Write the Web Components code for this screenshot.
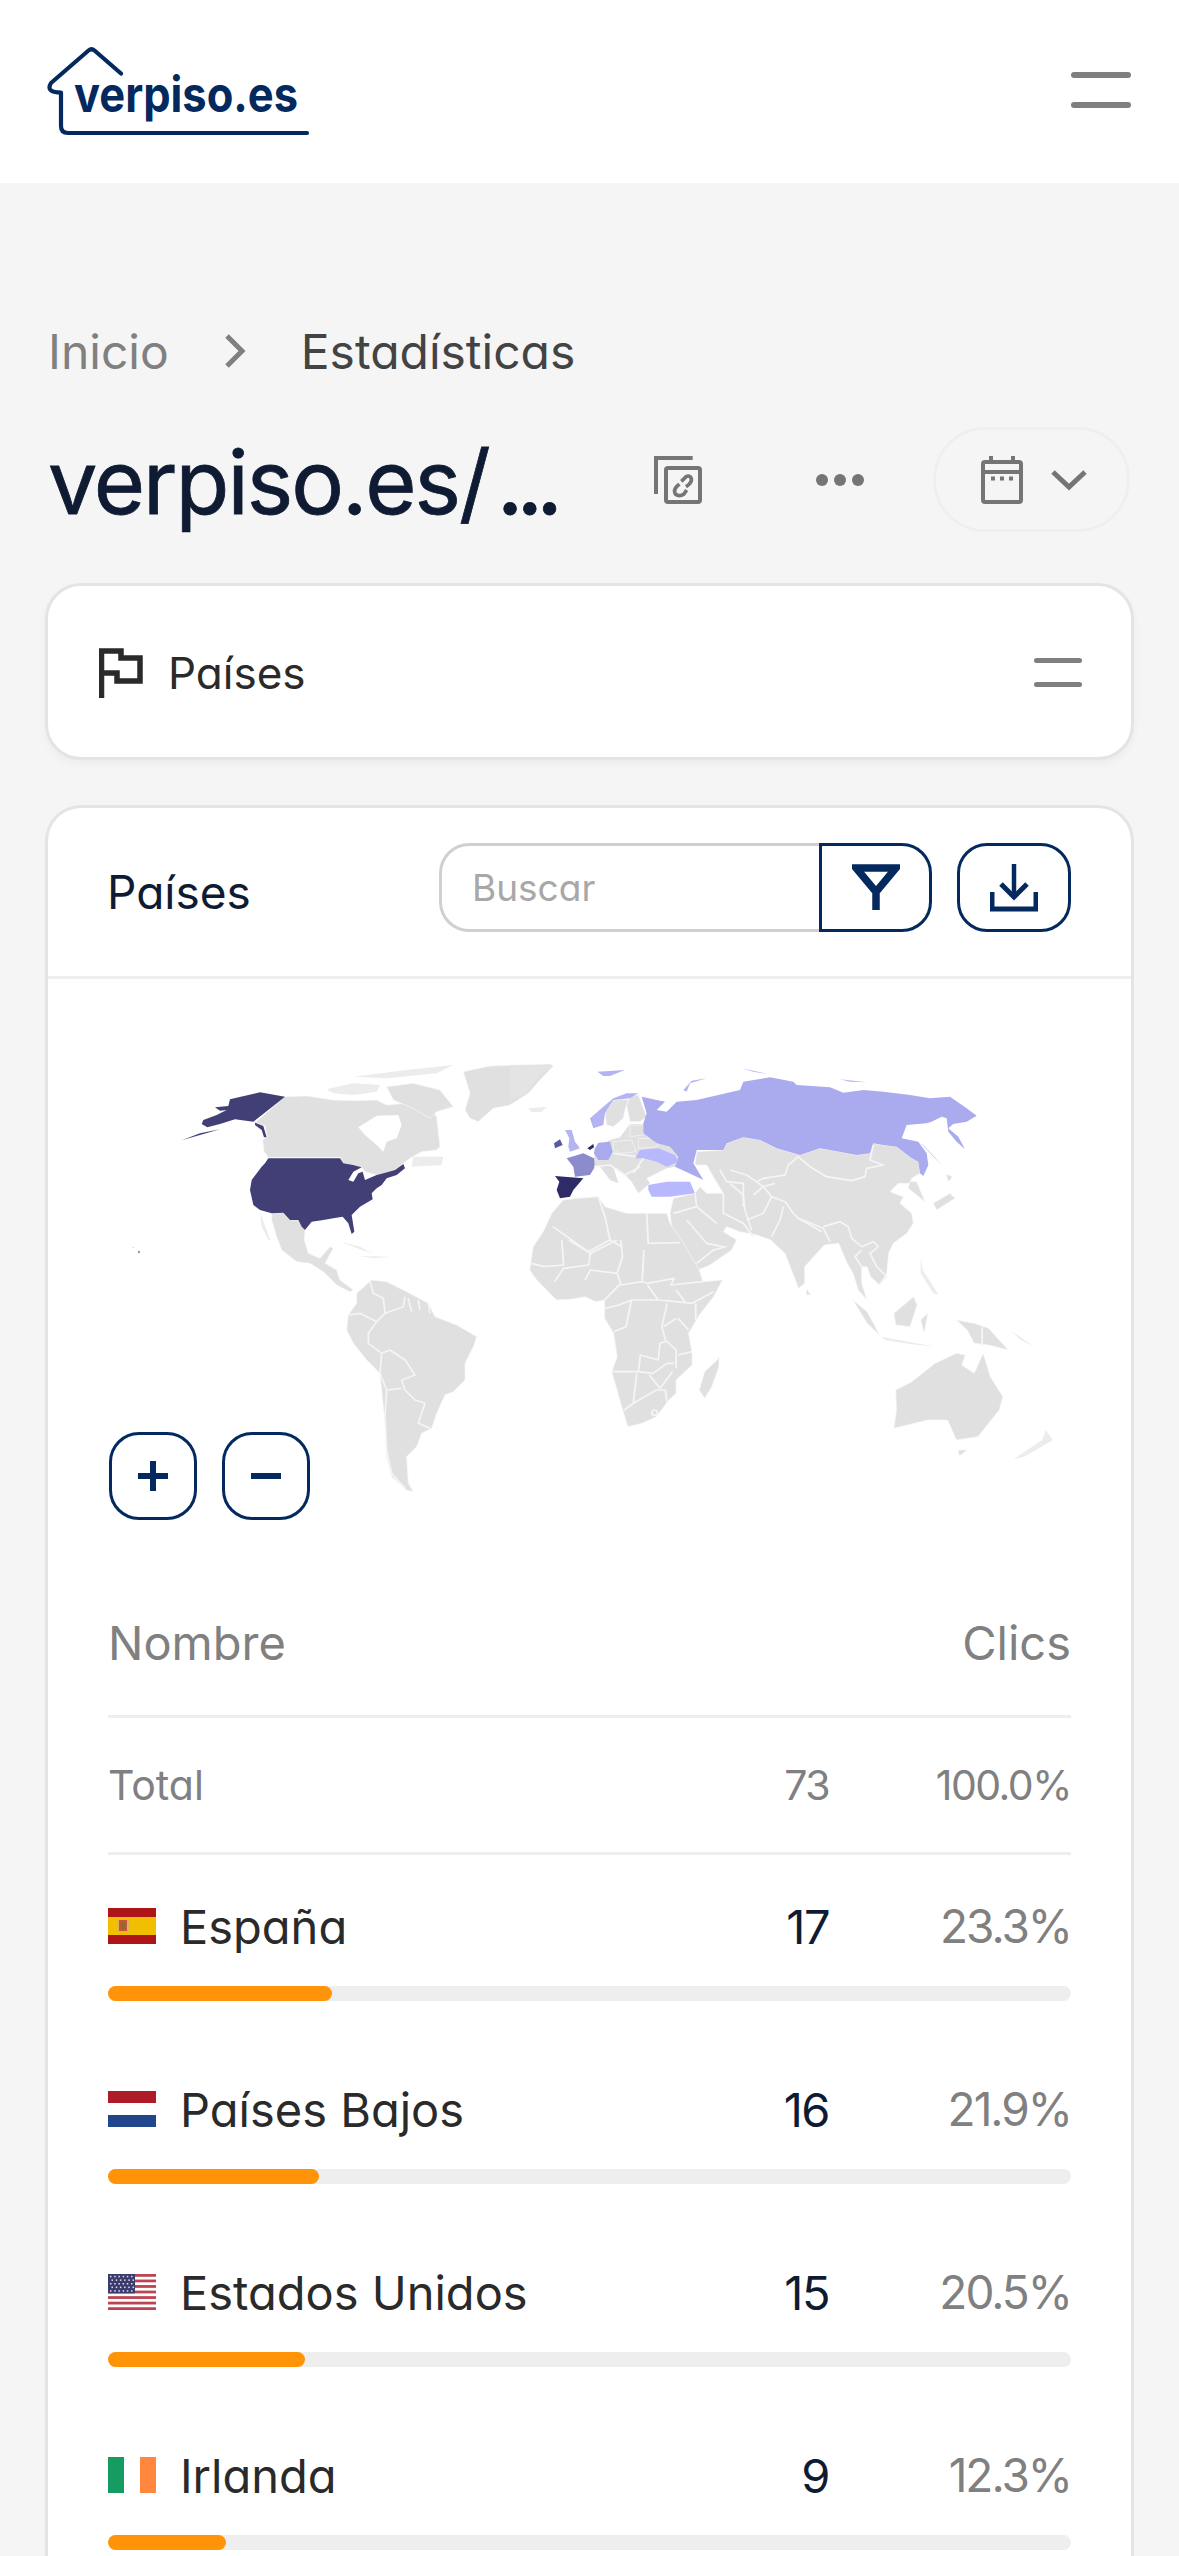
<!DOCTYPE html>
<html lang="es">
<head>
<meta charset="utf-8">
<title>verpiso.es</title>
<style>
  html, body {
    margin: 0;
    height: 2556px;
    overflow: hidden;
    background: #f5f5f5;
    font-family: Inter, "Liberation Sans", sans-serif;
    font-feature-settings: "cv11";
  }
  vp-main {
    display: block;
    padding: 0 45px;
  }
</style>
</head>
<body>
<vp-header></vp-header>
<vp-main>
  <vp-breadcrumb current="Estadísticas">Inicio</vp-breadcrumb>
  <vp-titlebar>verpiso.es/<span style="letter-spacing:-7px;margin-left:8px;font-weight:500">...</span></vp-titlebar>
  <vp-select-card>Países</vp-select-card>
  <vp-data-card heading="Países">
    <vp-map></vp-map>
    <vp-table total="73">
      <vp-row name="España" flag="es" clicks="17" percent="23.3"></vp-row>
      <vp-row name="Países Bajos" flag="nl" clicks="16" percent="21.9"></vp-row>
      <vp-row name="Estados Unidos" flag="us" clicks="15" percent="20.5"></vp-row>
      <vp-row name="Irlanda" flag="ie" clicks="9" percent="12.3"></vp-row>
    </vp-table>
  </vp-data-card>
</vp-main>

<script>
const NAVY = "#04295f";

class VpHeader extends HTMLElement {
  constructor() {
    super();
    this.attachShadow({ mode: "open" });
    this.shadowRoot.innerHTML = `
      <style>
        :host {
          display: flex;
          align-items: flex-start;
          justify-content: space-between;
          height: 183px;
          background: #fff;
          padding: 30px 48px 0 30px;
          box-sizing: border-box;
        }
        text {
          font: 700 49px Inter, "Liberation Sans", sans-serif;
          fill: ${NAVY};
        }
        .menu {
          display: flex;
          flex-direction: column;
          gap: 24px;
          margin-top: 42px;
        }
        .menu i {
          display: block;
          width: 60px;
          height: 6px;
          border-radius: 3px;
          background: #7f7f7f;
        }
      </style>
      <svg width="300" height="120" viewBox="0 0 300 120">
        <path d="M91 43.500 64.500 20.500Q61.500 18 58.500 20.500L21 53Q18 58 21 60.500Q24 62.500 31 62.500V96Q31 103 38 103H277" fill="none" stroke="${NAVY}" stroke-width="4.200" stroke-linecap="round" stroke-linejoin="round"/>
        <text x="44" y="81.500" textLength="224" lengthAdjust="spacingAndGlyphs">verpiso.es</text>
      </svg>
      <div class="menu"><i></i><i></i></div>
    `;
  }
}

class VpBreadcrumb extends HTMLElement {
  constructor() {
    super();
    this.attachShadow({ mode: "open" });
    this.shadowRoot.innerHTML = `
      <style>
        :host {
          display: flex;
          align-items: center;
          height: 60px;
          padding: 138px 0 46px 3px;
          font-size: 48px;
          color: #808080;
        }
        svg { margin: 0 55px 0 55px; }
        .current { color: #434343; }
      </style>
      <slot></slot>
      <svg width="22" height="34" viewBox="0 0 22 34"><path d="M3 2 18 17 3 32" fill="none" stroke="#808080" stroke-width="5"/></svg>
      <span class="current">${this.getAttribute("current")}</span>
    `;
  }
}

class VpTitlebar extends HTMLElement {
  constructor() {
    super();
    this.attachShadow({ mode: "open" });
    this.shadowRoot.innerHTML = `
      <style>
        :host {
          display: flex;
          align-items: center;
          height: 105px;
          margin-bottom: 51px;
          color: #0f1b33;
        }
        .title {
          width: 606px;
          padding: 6px 0 0 3px;
          font-size: 88px;
          letter-spacing: -2px;
          line-height: 105px;
          white-space: nowrap;
          -webkit-text-stroke: 0.8px #0f1b33;
        }
        svg { display: block; }
        .dots {
          display: flex;
          gap: 6px;
          margin: 0 69px 0 114px;
        }
        .dots i {
          width: 12px;
          height: 12px;
          border-radius: 50%;
          background: #757575;
        }
        .pill {
          display: flex;
          align-items: center;
          gap: 28px;
          box-sizing: border-box;
          width: 197px;
          height: 105px;
          padding-left: 45px;
          border: 3px solid #efefef;
          border-radius: 52px;
        }
      </style>
      <div class="title"><slot></slot></div>
      <svg width="48" height="48" viewBox="0 0 144 144" fill="none" stroke="#757575" stroke-width="12">
        <path d="M6 114V6H116"/>
        <rect x="36" y="36" width="102" height="102" rx="6"/>
        <path d="M82 76 96 62Q108 56 112 68 114 78 104 86L96 92M98 102 90 114Q76 124 64 114 58 102 68 92L76 84" stroke-width="11"/>
      </svg>
      <div class="dots"><i></i><i></i><i></i></div>
      <div class="pill">
        <svg width="42" height="48" viewBox="0 0 42 48" fill="none" stroke="#757575" stroke-width="4">
          <rect x="2" y="6" width="38" height="40" rx="2"/>
          <path d="M2 16H40"/>
          <path d="M10 0V6M32 0V6" stroke-width="4"/>
          <path d="M10 22.500h4M19 22.500h4M28 22.500h4" stroke-width="4"/>
        </svg>
        <svg width="36" height="22" viewBox="0 0 36 22" fill="none" stroke="#757575" stroke-width="5"><path d="M2 3 18 18 34 3"/></svg>
      </div>
    `;
  }
}

class VpSelectCard extends HTMLElement {
  constructor() {
    super();
    this.attachShadow({ mode: "open" });
    this.shadowRoot.innerHTML = `
      <style>
        :host {
          display: flex;
          align-items: center;
          box-sizing: border-box;
          height: 177px;
          margin-bottom: 45px;
          padding: 0 49px 0 51px;
          background: #fff;
          border: 3px solid #e4e4e4;
          border-radius: 36px;
          box-shadow: 0 4px 8px rgba(0, 0, 0, 0.04);
          font-size: 44px;
          color: #2a2a2a;
        }
        svg { display: block; margin-top: 2px; }
        .label { flex: 1; margin-left: 25px; margin-top: 2px; }
        .menu { display: flex; flex-direction: column; gap: 19px; margin-top: 2px; }
        .menu i { display: block; width: 48px; height: 5px; border-radius: 3px; background: #7f7f7f; }
      </style>
      <svg width="44" height="50" viewBox="0 0 44 50" fill="none" stroke="#2a2a2a" stroke-width="5.500">
        <path d="M2.500 50V3H22V10H41V33H18V25H2.500"/>
      </svg>
      <div class="label"><slot></slot></div>
      <div class="menu"><i></i><i></i></div>
    `;
  }
}

class VpDataCard extends HTMLElement {
  constructor() {
    super();
    this.attachShadow({ mode: "open" });
    this.shadowRoot.innerHTML = `
      <style>
        :host {
          display: block;
          background: #fff;
          border: 3px solid #e4e4e4;
          border-bottom: 0;
          border-radius: 36px 36px 0 0;
          color: #0f1b33;
        }
        header {
          display: flex;
          align-items: center;
          padding: 35px 60px 44px 59px;
          border-bottom: 3px solid #eeeeee;
        }
        h2 {
          flex: 1;
          margin: 0;
          font-size: 46px;
          font-weight: 400;
          padding-top: 8px;
        }
        .search {
          box-sizing: border-box;
          width: 380px;
          height: 89px;
          padding: 0 0 0 30px;
          display: flex;
          align-items: center;
          border: 3px solid #d0d0d0;
          border-right: 0;
          border-radius: 30px 0 0 30px;
          font-size: 37px;
          color: #a8a8a8;
        }
        button {
          display: flex;
          align-items: center;
          justify-content: center;
          box-sizing: border-box;
          height: 89px;
          padding: 0;
          background: #fff;
          border: 3px solid ${NAVY};
        }
        .filter { width: 113px; border-radius: 0 30px 30px 0; margin-right: 25px; }
        .download { width: 114px; border-radius: 30px; }
      </style>
      <header>
        <h2>${this.getAttribute("heading")}</h2>
        <div class="search">Buscar</div>
        <button class="filter">
          <svg width="48" height="48" viewBox="0 0 48 48" fill="none" stroke="${NAVY}" stroke-width="7.500"><path d="M4 4H44L24 28ZM24 26V46" stroke-linejoin="miter"/></svg>
        </button>
        <button class="download">
          <svg width="48" height="48" viewBox="0 0 48 48" fill="none" stroke="${NAVY}" stroke-width="4.500">
            <path d="M24 0V32"/><path d="M11 20 24 33 37 20" stroke-width="5"/>
            <path d="M2 28V45H46V28" stroke-width="5"/>
          </svg>
        </button>
      </header>
      <slot></slot>
    `;
  }
}

class VpMap extends HTMLElement {
  constructor() {
    super();
    this.attachShadow({ mode: "open" });
    const z = "translate(120 1050) scale(.33333)";
    const e = "translate(510 1050) scale(.33333)";
    const a = "translate(510 1240) scale(.35714 .33333)";
    const east = "translate(730 1050) scale(.33333)";
    this.shadowRoot.innerHTML = `
      <style>
        :host {
          display: block;
          position: relative;
          height: 621px;
        }
        svg.world { display: block; filter: blur(0.6px); }
        .land polygon { fill: #e0e0e0; stroke: #f7f7f7; stroke-width: 2; stroke-linejoin: round; }
        .faint polygon { fill: #ececec; stroke: none; }
        .lines { fill: none; stroke: #f5f5f5; stroke-width: 5; stroke-linejoin: round; }
        .zoom {
          position: absolute;
          left: 61px;
          top: 453px;
          display: flex;
          gap: 25px;
        }
        .zoom span {
          display: flex;
          align-items: center;
          justify-content: center;
          box-sizing: border-box;
          width: 88px;
          height: 88px;
          border: 3px solid ${NAVY};
          border-radius: 30px;
          background: #fff;
        }
      </style>
      <svg class="world" width="1083" height="621" viewBox="48 979 1083 621">
        <g class="land" transform="${z}">
          <polygon points="495,140 560,138 640,150 700,152 770,150 800,165 860,160 930,170 950,200 960,290 950,300 905,305 870,325 850,340 825,360 790,370 770,375 735,365 725,352 700,345 670,340 660,322 445,322 432,305 428,270 442,262 435,228 405,218"/>
          <polygon points="715,232 770,197 835,195 845,225 830,265 800,275 790,305 770,285 735,255" style="fill:#fff;stroke:none"/>
          <polygon points="820,150 800,110 880,100 960,120 1000,170 950,185 930,205 880,175"/>
          <polygon points="1030,65 1110,48 1290,42 1300,48 1260,90 1225,130 1170,165 1120,175 1075,215 1050,205 1035,180 1050,130"/>
          <polygon points="455,490 490,488 510,510 535,510 545,530 555,540 553,570 565,610 600,625 630,590 640,595 615,640 650,660 660,690 700,720 690,725 650,705 610,665 570,640 530,635 485,600 470,560 455,510"/>
          <polygon points="710,730 755,690 800,695 850,720 925,760 945,800 1010,825 1070,860 1060,890 1035,940 1035,990 1000,1025 975,1035 950,1090 935,1135 905,1150 890,1190 860,1220 865,1300 880,1325 860,1320 815,1280 800,1220 795,1120 780,970 740,930 700,880 680,840 685,795 710,760"/>
        </g>
        <g class="faint" transform="${z}">
          <polygon points="620,118 700,100 780,105 770,125 700,135 640,130"/>
          <polygon points="700,80 860,60 1000,45 950,70 800,85"/>
          <polygon points="880,320 970,320 965,345 875,350"/>
          <polygon points="420,485 450,570 445,570 425,530"/>
          <polygon points="660,575 720,590 760,612 700,590"/>
          <polygon points="720,618 810,620 760,625"/>
        </g>
        <g transform="${z}" fill="#423f77">
          <polygon points="495,140 420,127 395,133 330,148 325,168 285,172 300,182 320,180 290,195 250,210 245,222 262,232 300,222 345,208 400,215"/>
          <polygon points="405,218 430,228 440,262 432,262 425,240 405,225"/>
          <polygon points="300,238 185,271 240,250"/>
          <polygon points="445,325 660,325 670,340 700,345 725,352 700,365 685,390 700,395 715,370 728,365 735,390 770,375 790,370 825,360 850,342 855,355 830,375 800,385 785,405 770,415 755,430 758,448 720,470 695,495 703,545 695,552 685,520 668,500 640,505 610,510 575,515 555,540 545,530 535,510 510,510 490,488 455,490 420,480 400,465 390,420 395,390 425,350 435,340"/>
          <circle cx="57" cy="606" r="3.500" fill="#9a98b8"/>
          <circle cx="40" cy="592" r="1.500" fill="#b5b5c8"/>
        </g>
        <g class="lines" transform="${z}">
          <polyline points="750,695 760,730 790,745 795,790 770,815"/>
          <polyline points="685,795 720,790 770,815 745,850 745,880 785,910"/>
          <polyline points="785,910 780,970 800,1020 795,1100 800,1200 815,1270 855,1315"/>
          <polyline points="785,910 810,900 855,930 885,975 845,990 855,1020 885,1050 915,1060 905,1090 895,1120 930,1135"/>
          <polyline points="845,1015 800,1020"/>
          <polyline points="795,790 850,770 855,740"/>
          <polyline points="865,745 875,785"/>
          <polyline points="895,750 900,780"/>
          <polyline points="925,760 930,790"/>
        </g>
        <g class="land" transform="${e}">
          <polygon points="555,345 560,305 640,300 650,280 700,262 750,270 800,295 870,315 930,295 1040,315 1080,310 1090,280 1120,285 1160,290 1205,325 1225,335 1230,370 1205,385 1200,400 1165,400 1140,425 1165,435 1180,440 1170,460 1205,490 1210,520 1190,550 1150,580 1136,610 1130,670 1109,705 1082,680 1071,650 1055,650 1055,700 1071,750 1045,720 1029,670 1012,640 986,580 943,585 884,650 884,700 866,715 825,610 782,570 740,555 690,545 650,530 640,545 680,570 665,600 600,645 540,670 530,660 490,570 480,490 490,445 555,430 570,410 590,430 640,430 610,380 590,345"/>
          <polygon points="252,330 255,295 300,270 330,262 360,222 400,222 400,250 440,280 480,290 505,320 495,350 470,355 440,370 410,385 420,400 385,430 365,395 340,370 310,350 325,400 300,390 270,350 255,350" style="stroke:none"/>
          <polygon points="285,190 310,150 355,148 345,180 340,205 310,230 290,225"/>
          <polygon points="350,165 360,140 385,135 410,200 390,215 360,215"/>
          <polygon points="360,225 400,225 400,255 360,260"/>
          <polygon points="385,265 430,265 445,290 385,295"/>
          <polygon points="310,275 365,270 378,305 330,310 310,300"/>
          <polygon points="0,45 130,48 90,75 50,130 0,150" style="fill:#e4e4e4;stroke:none"/>
          <polygon points="55,175 110,170 95,185 65,187" style="fill:#ececec;stroke:none"/>
        </g>
        <g transform="${e}">
          <polygon fill="#aaaaee" points="395,140 440,150 465,155 440,180 470,185 500,155 560,150 625,135 690,120 700,95 780,82 850,95 860,105 960,112 1000,128 1060,120 1120,125 1200,135 1260,145 1320,140 1370,175 1400,197 1370,215 1330,222 1315,235 1345,260 1365,298 1340,275 1315,245 1310,205 1295,200 1265,215 1250,220 1190,225 1175,265 1225,275 1250,310 1255,345 1240,378 1230,370 1225,335 1205,325 1160,290 1120,285 1090,280 1080,310 1040,315 930,295 870,315 800,295 750,270 700,262 650,280 640,300 560,300 550,340 580,390 560,380 495,350 505,320 480,290 440,280 400,250 400,220 410,190"/>
          <g fill="#b4b4f2">
            <polygon points="1235,280 1295,345 1270,320 1238,285"/>
            <polygon points="520,120 545,92 590,85 540,100 530,125"/>
            <polygon points="695,55 775,72 730,65"/>
            <polygon points="990,88 1070,97 1020,95"/>
            <polygon points="262,65 345,60 300,78 280,78"/>
            <polygon points="240,205 280,170 310,145 350,130 385,130 360,145 310,150 285,190 280,225 250,235"/>
            <polygon points="165,240 185,240 195,275 210,295 180,305 175,290 178,265"/>
          </g>
          <polygon fill="#a9a9ed" points="255,295 265,278 300,275 308,305 295,330 265,330 252,310"/>
          <polygon fill="#b8b8ff" points="375,325 390,300 445,295 495,315 505,335 470,350 440,335 400,325"/>
          <polygon fill="#b8b8ff" points="415,405 470,395 540,395 555,430 480,440 425,440 415,420"/>
          <polygon fill="#8c8ccc" points="170,325 220,310 252,325 255,350 240,375 195,380 190,350"/>
          <polygon fill="#2f2b66" points="135,378 220,385 190,420 180,440 150,445 140,420 148,395"/>
          <polygon fill="#5a5aa0" points="132,280 150,268 158,285 135,295"/>
          <polygon fill="#2f2b66" points="232,295 250,282 252,292 240,300"/>
        </g>
        <g class="lines" transform="${e}">
          <polyline points="640,430 640,490 700,520 730,560"/>
          <polyline points="555,430 560,470 620,520"/>
          <polyline points="490,490 560,470"/>
          <polyline points="530,510 590,580 640,590"/>
          <polyline points="560,640 610,600 650,590"/>
          <polyline points="630,360 650,395 700,400 700,470"/>
          <polyline points="252,350 300,345 345,375 390,350"/>
          <polyline points="310,310 378,320"/>
          <polyline points="400,325 370,370"/>
        </g>
        <g class="land" transform="${a}">
          <polygon points="65,20 93,-25 117,-80 149,-120 187,-125 247,-130 266,-100 327,-80 383,-80 439,-80 448,-50 480,0 530,90 540,125 595,120 570,170 530,225 500,280 510,340 510,375 465,420 465,460 445,480 410,530 370,550 330,560 310,490 285,395 300,350 290,280 265,235 265,180 240,185 210,170 170,178 130,180 75,120 55,90"/>
          <polygon points="585,350 585,380 565,440 545,475 530,450 545,395 580,360"/>
          <polygon points="830,145 842,165 830,165"/>
          <polygon points="960,180 1000,215 1035,285 1000,250"/>
          <polygon points="1075,220 1130,170 1140,195 1120,260 1080,255"/>
          <polygon points="1150,240 1170,220 1160,280"/>
          <polygon points="1250,240 1300,250 1340,265 1395,330 1340,315 1300,310 1280,270"/>
          <polygon points="1080,450 1125,425 1190,370 1250,340 1275,345 1265,375 1300,400 1325,340 1345,410 1380,470 1370,510 1310,590 1250,600 1225,540 1170,540 1075,565 1082,510"/>
          <polygon points="1255,630 1280,630 1258,648"/>
        </g>
        <g class="faint" transform="${a}">
          <polygon points="1040,290 1190,320 1120,312 1050,300"/>
          <polygon points="1150,50 1155,90 1180,130 1200,165 1185,160 1150,100"/>
          <polygon points="1500,570 1520,600 1440,650 1410,658 1490,600"/>
          <polygon points="1400,270 1440,300 1470,320 1430,300"/>
        </g>
        <g class="lines" transform="${a}">
          <polyline points="120,-40 219,35"/>
          <polyline points="247,-130 266,-70 280,0 219,35"/>
          <polyline points="280,0 313,20"/>
          <polyline points="383,-80 387,10 476,8"/>
          <polyline points="145,0 150,75 95,80 60,70"/>
          <polyline points="165,0 225,40 220,75 150,85 125,125"/>
          <polyline points="225,40 300,0"/>
          <polyline points="310,0 315,50 300,100 225,90 210,120"/>
          <polyline points="300,100 310,130 265,180"/>
          <polyline points="310,135 370,125 385,130 460,115 450,135 540,125"/>
          <polyline points="375,30 370,125"/>
          <polyline points="385,135 415,180 340,180 305,195 265,205"/>
          <polyline points="415,180 465,185 510,190 570,155"/>
          <polyline points="465,150 490,185"/>
          <polyline points="340,180 325,260 290,275"/>
          <polyline points="440,190 425,260 435,300 465,330 465,385"/>
          <polyline points="520,190 520,240"/>
          <polyline points="470,235 500,270"/>
          <polyline points="430,260 465,235"/>
          <polyline points="435,305 420,310 415,360 365,345 360,395 285,395"/>
          <polyline points="360,395 400,400 440,370 460,370"/>
          <polyline points="355,400 345,490 320,510"/>
          <polyline points="345,490 410,450 435,450 440,490"/>
          <polyline points="390,405 420,445 455,395"/>
          <polyline points="470,345 510,335"/>
          <circle cx="405" cy="518" r="8"/>
          <polyline points="1322,262 1322,315" />
        </g>
        <g class="lines" transform="${east}">
          <polyline points="205,320 240,350 290,380 365,392 405,380 410,355 460,345 420,330 430,285"/>
          <polyline points="205,320 175,345 165,375 100,385 80,395"/>
          <polyline points="0,360 50,375 100,410 70,435"/>
          <polyline points="0,400 40,435 45,480 65,540"/>
          <polyline points="50,510 100,490 125,440 165,455 190,490 205,505 280,535 300,575"/>
          <polyline points="125,440 100,410 135,400"/>
          <polyline points="160,470 150,510 125,560"/>
          <polyline points="205,505 275,545"/>
          <polyline points="280,530 330,515 355,530 365,565 395,590"/>
          <polyline points="395,590 430,575 445,590"/>
          <polyline points="395,600 375,620 395,650"/>
          <polyline points="445,590 420,610 440,650 470,680 445,705"/>
        </g>
        <g class="land" transform="${east}">
          <polygon points="540,395 560,395 585,455 560,435 535,415"/>
          <polygon points="610,460 660,430 675,445 620,480"/>
          <polygon points="648,372 668,380 655,395"/>
        </g>
      </svg>
      <div class="zoom">
        <span><svg width="30" height="30" viewBox="0 0 30 30" fill="none" stroke="${NAVY}" stroke-width="6"><path d="M0 15H30M15 0V30"/></svg></span>
        <span><svg width="30" height="30" viewBox="0 0 30 30" fill="none" stroke="${NAVY}" stroke-width="6"><path d="M0 15H30"/></svg></span>
      </div>
    `;
  }
}

class VpTable extends HTMLElement {
  constructor() {
    super();
    this.attachShadow({ mode: "open" });
    this.shadowRoot.innerHTML = `
      <style>
        :host {
          display: block;
          padding: 0 60px;
        }
        .head, .total {
          display: flex;
          align-items: center;
          border-bottom: 3px solid #eeeeee;
          color: #808080;
        }
        .head {
          justify-content: space-between;
          height: 85px;
          padding-bottom: 30px;
          font-size: 47px;
        }
        .total {
          display: grid;
          grid-template-columns: 1fr 120px 242px;
          height: 134px;
          font-size: 41px;
        }
        .total span + span { text-align: right; letter-spacing: -1.500px; }
      </style>
      <div class="head"><span>Nombre</span><span>Clics</span></div>
      <div class="total"><span>Total</span><span>${this.getAttribute("total")}</span><span>100.0%</span></div>
      <slot></slot>
    `;
  }
}

const FLAGS = {
  es: `<rect width="48" height="36" fill="#ad1519"/><rect y="9" width="48" height="18" fill="#f1bf00"/>
       <rect x="11" y="12" width="8" height="11" fill="#c8553a"/><rect x="13" y="14" width="4" height="7" fill="#8e6a2f"/>
       <path d="M10 12V24M20 12V24" stroke="#d8b070" stroke-width="1.500"/>`,
  nl: `<rect width="48" height="12" fill="#ae1c28"/><rect y="12" width="48" height="12" fill="#fff"/><rect y="24" width="48" height="12" fill="#21468b"/>`,
  ie: `<rect width="16" height="36" fill="#169b62"/><rect x="16" width="16" height="36" fill="#fff"/><rect x="32" width="16" height="36" fill="#ff883e"/>`,
  us: (() => {
    let s = `<rect width="48" height="36" fill="#fff"/>`;
    for (let i = 0; i < 7; i++) {
      s += `<rect y="${i * 5.54}" width="48" height="2.770" fill="#b22234" opacity=".85"/>`;
    }
    s += `<rect width="27" height="19.400" fill="#3c3b6e"/>`;
    for (let r = 0; r < 5; r++) {
      for (let c = 0; c < 6; c++) {
        s += `<rect x="${2 + c * 4.2 + (r % 2) * 1.5}" y="${1.800 + r * 3.600}" width="1.500" height="1.500" fill="#dfe0ea"/>`;
      }
    }
    return s;
  })(),
};

class VpRow extends HTMLElement {
  constructor() {
    super();
    this.attachShadow({ mode: "open" });
    const percent = this.getAttribute("percent");
    this.shadowRoot.innerHTML = `
      <style>
        :host {
          display: block;
          padding: 41px 0 37px;
        }
        .line {
          display: grid;
          grid-template-columns: 1fr 120px 242px;
          align-items: center;
          height: 60px;
          margin-bottom: 30px;
          font-size: 47px;
        }
        .name {
          display: flex;
          align-items: center;
          gap: 24px;
          color: #2a2a2a;
        }
        svg { display: block; flex: none; }
        .clicks { text-align: right; color: #0f1b33; letter-spacing: -1.500px; }
        .percent { text-align: right; color: #808080; font-size: 46px; letter-spacing: -2px; }
        .track {
          height: 15px;
          border-radius: 8px;
          background: #eeeeee;
        }
        .fill {
          height: 15px;
          border-radius: 8px;
          background: #ff9408;
        }
      </style>
      <div class="line">
        <div class="name">
          <svg width="48" height="36" viewBox="0 0 48 36">${FLAGS[this.getAttribute("flag")]}</svg>
          <span>${this.getAttribute("name")}</span>
        </div>
        <div class="clicks">${this.getAttribute("clicks")}</div>
        <div class="percent">${percent}%</div>
      </div>
      <div class="track"><div class="fill" style="width:${percent}%"></div></div>
    `;
  }
}

customElements.define("vp-header", VpHeader);
customElements.define("vp-breadcrumb", VpBreadcrumb);
customElements.define("vp-titlebar", VpTitlebar);
customElements.define("vp-select-card", VpSelectCard);
customElements.define("vp-data-card", VpDataCard);
customElements.define("vp-map", VpMap);
customElements.define("vp-table", VpTable);
customElements.define("vp-row", VpRow);
</script>
</body>
</html>
